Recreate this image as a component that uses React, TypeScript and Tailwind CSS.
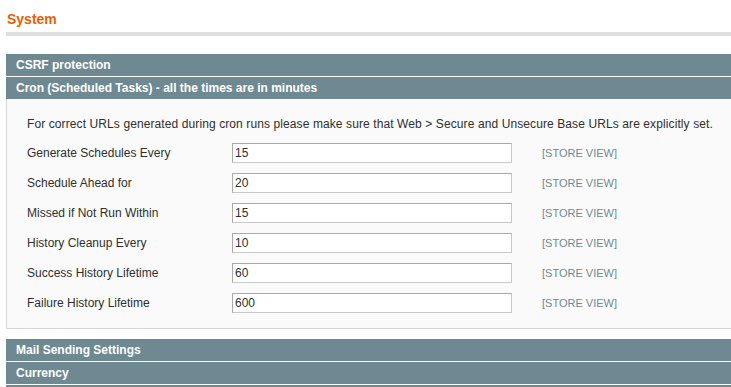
import React from "react";

const rows: [string, string][] = [
  ["Generate Schedules Every", "15"],
  ["Schedule Ahead for", "20"],
  ["Missed if Not Run Within", "15"],
  ["History Cleanup Every", "10"],
  ["Success History Lifetime", "60"],
  ["Failure History Lifetime", "600"],
];

function Head({ children }: { children?: React.ReactNode }) {
  return (
    <div className="h-[22px] bg-[#6f8992] pl-[10px] text-[12px] font-bold leading-[22px] text-white">
      {children}
    </div>
  );
}

export default function App() {
  return (
    <div className="h-screen w-full overflow-hidden bg-white font-['Liberation_Sans',Arial,sans-serif] text-[12px] text-[#2f2f2f]">
      <div className="w-[760px] pl-[6px]">
        <h3 className="h-[32px] pl-[1px] pt-[11px] text-[14px] font-bold leading-[17px] text-[#eb5e00]">
          System
        </h3>
        <div className="h-[4px] bg-[#dfdfdf]" />
        <div className="mt-[18px] flex flex-col gap-px">
          <Head>CSRF protection</Head>
          <Head>Cron (Scheduled Tasks) - all the times are in minutes</Head>
        </div>
        <div className="border-x border-b border-[#d6d6d6] bg-[#fafafa] pl-[20px] pt-[18px] pb-[15px]">
          <p className="leading-[15px] tracking-[0.1px]">
            For correct URLs generated during cron runs please make sure that Web &gt; Secure and Unsecure Base URLs are explicitly set.
          </p>
          <div className="mt-[11px] flex flex-col gap-[10px]">
            {rows.map(([label, value]) => (
              <div key={label} className="flex h-[20px] items-center">
                <div className="w-[205px] leading-[15px]">{label}</div>
                <input
                  readOnly
                  value={value}
                  className="box-border h-[20px] w-[280px] border border-solid border-t-[#aaaaaa] border-l-[#aaaaaa] border-r-[#c8c8c8] border-b-[#c8c8c8] bg-white px-[2px] text-[12px] text-[#2f2f2f] outline-none"
                />
                <div className="ml-[30px] text-[11px] leading-[14px] text-[#6f8992]">[STORE VIEW]</div>
              </div>
            ))}
          </div>
        </div>
        <div className="mt-[10px] flex flex-col gap-px">
          <Head>Mail Sending Settings</Head>
          <Head>Currency</Head>
          <Head />
        </div>
      </div>
    </div>
  );
}
